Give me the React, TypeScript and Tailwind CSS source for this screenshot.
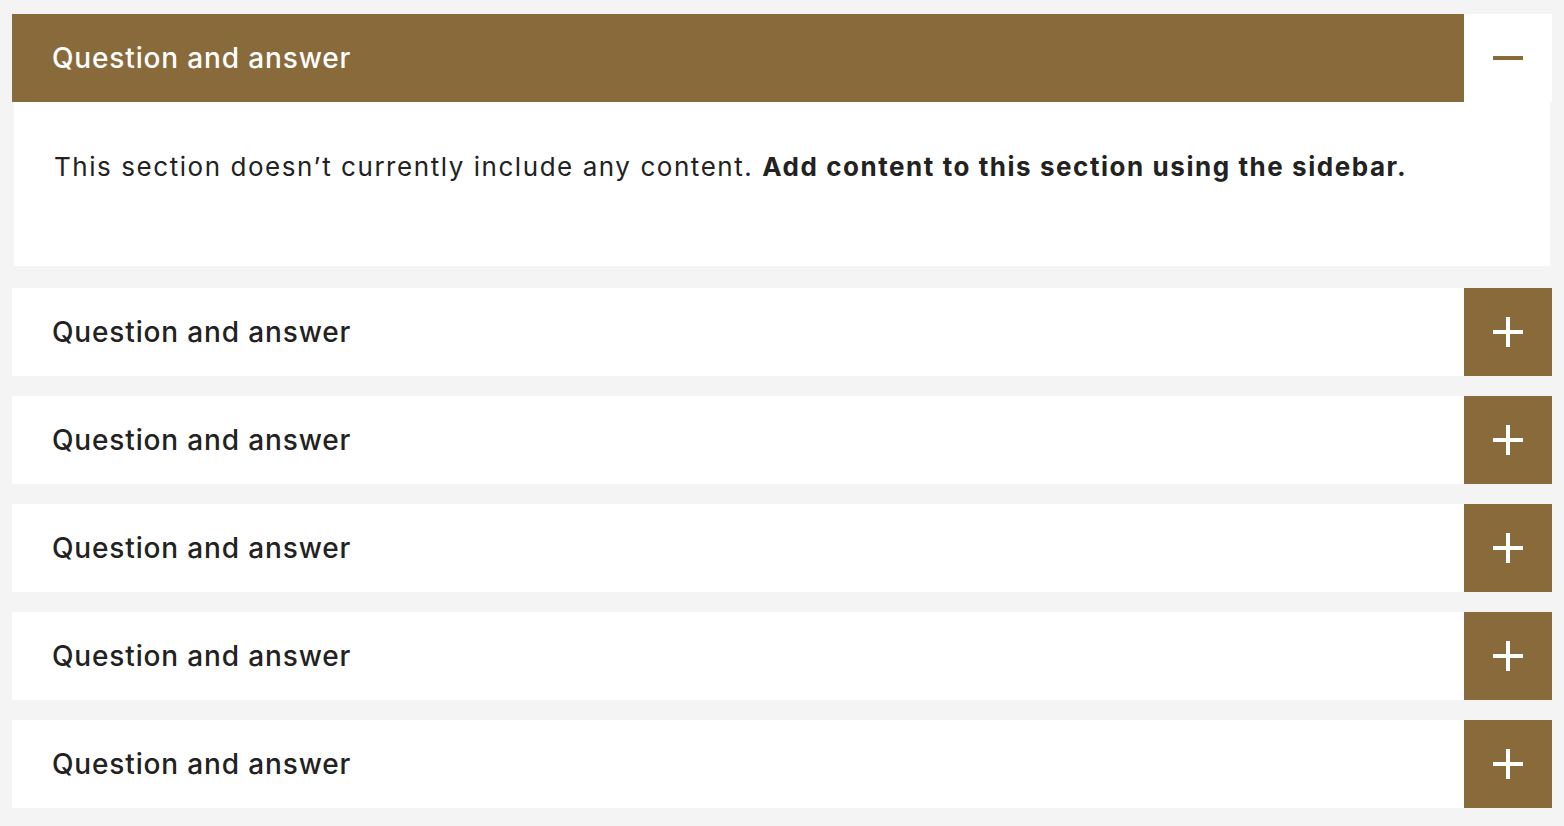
import { useState } from "react";

const items = [
  "Question and answer",
  "Question and answer",
  "Question and answer",
  "Question and answer",
  "Question and answer",
  "Question and answer",
];

function Minus() {
  return <div className="w-[30px] h-[4px] bg-[#896a3b]"></div>;
}

function Plus() {
  return (
    <div className="relative w-[30px] h-[30px]">
      <div className="absolute left-0 top-[13px] w-[30px] h-[4px] bg-white"></div>
      <div className="absolute left-[13px] top-0 w-[4px] h-[30px] bg-white"></div>
    </div>
  );
}

export default function App() {
  const [open, setOpen] = useState(0);

  return (
    <div
      className="min-h-screen bg-[#f4f4f4] px-[12px] pt-[14px] pb-[18px]"
      style={{ fontFamily: "Inter, 'Noto Sans', sans-serif" }}
    >
      <div className="flex flex-col">
        {items.map((title, i) => {
          const isOpen = open === i;
          return (
            <div key={i} className={i === 0 ? "" : i === 1 ? "mt-[22px]" : "mt-[20px]"}>
              {/* header row */}
              <button
                type="button"
                onClick={() => setOpen(isOpen ? -1 : i)}
                className="flex w-full h-[88px] text-left"
              >
                <div
                  className={`flex-1 flex items-center pl-[40px] text-[28px] font-medium tracking-[0.85px] ${
                    isOpen ? "bg-[#896a3b] text-white" : "bg-white text-[#222222]"
                  }`}
                >
                  {title}
                </div>
                <div
                  className={`w-[88px] flex items-center justify-center ${
                    isOpen ? "bg-white" : "bg-[#896a3b]"
                  }`}
                >
                  {isOpen ? <Minus /> : <Plus />}
                </div>
              </button>

              {/* body */}
              {isOpen && (
                <div className="mx-[2px] bg-white h-[164px] pl-[40px] pt-[44px]">
                  <p className="text-[26px] leading-[42px] tracking-[1.55px] text-[#222222]">
                    This section doesn’t currently include any content.{" "}
                    <strong className="font-bold">Add content to this section using the sidebar.</strong>
                  </p>
                </div>
              )}
            </div>
          );
        })}
      </div>
    </div>
  );
}
